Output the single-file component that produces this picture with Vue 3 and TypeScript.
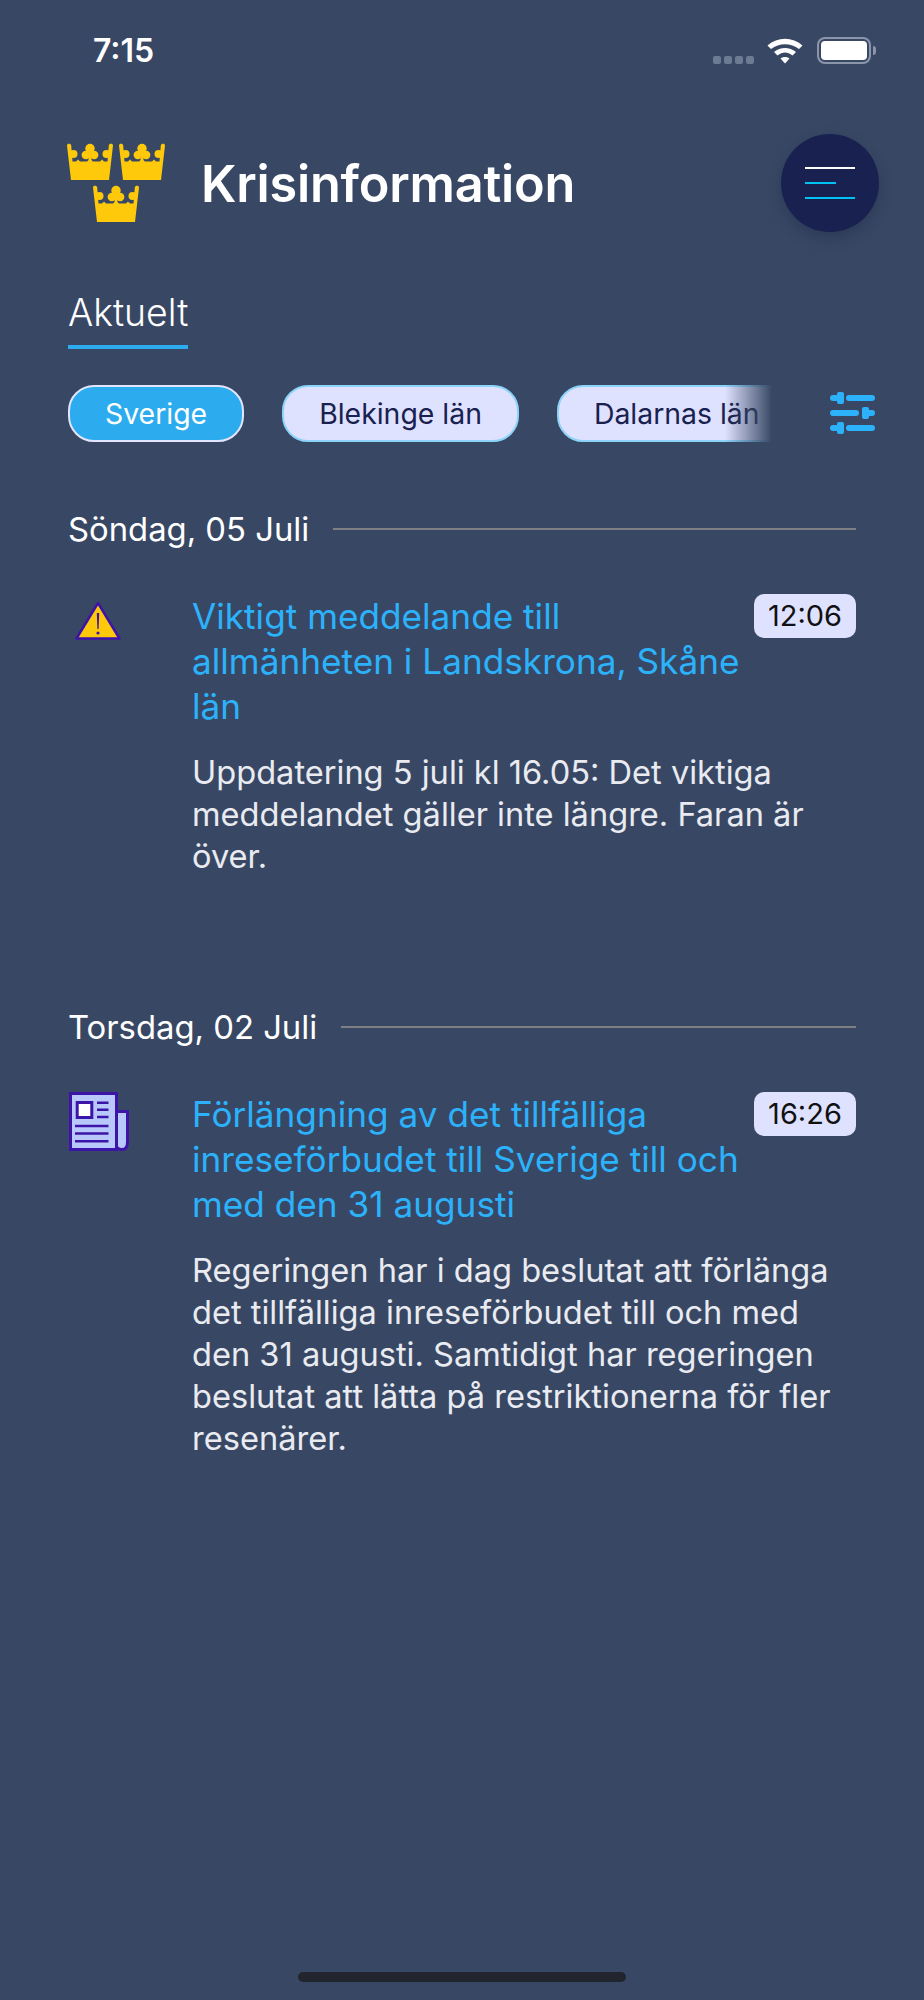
<template>
  <div class="screen">
    <!-- status bar -->
    <div class="status-bar">
      <span class="clock">7:15</span>
      <div class="status-icons">
        <div class="signal"><i v-for="n in 4" :key="n"></i></div>
        <svg class="wifi" width="36" height="28" viewBox="0 0 36 28">
          <path d="M0.500 9.500C10.500 0.500 25.500 0.500 35.500 9.500L32 13C24 6.500 12 6.500 4 13Z" fill="#fff" />
          <path d="M7 16C13.500 10.500 22.500 10.500 29 16L25.500 19.500C20.500 15.500 15.500 15.500 10.500 19.500Z" fill="#fff" />
          <path d="M13.500 22.500C16 20.500 20 20.500 22.500 22.500L18 27.500Z" fill="#fff" />
        </svg>
        <div class="battery"><div class="battery-fill"></div></div>
      </div>
    </div>

    <!-- header -->
    <header class="app-header">
      <svg class="logo" width="98" height="81" viewBox="0 0 98 81">
        <defs>
          <g id="crown">
            <path
              d="M0 2.500C0 0 4 0 4.200 2.500L5.500 18.500L9 18.500L11 16.500L13 18.500L20 18.500L23 16L26 18.500L33 18.500L35 16.500L37 18.500L40.500 18.500L41.800 2.500C42 0 46 0 46 2.500L42 37H4Z"
            />
            <circle cx="6.500" cy="11" r="4" />
            <circle cx="39.500" cy="11" r="4" />
            <circle cx="23" cy="5.500" r="4.700" />
            <circle cx="18.800" cy="12" r="4.200" />
            <circle cx="27.200" cy="12" r="4.200" />
            <rect x="21.500" y="10" width="3" height="8" />
          </g>
        </defs>
        <use href="#crown" x="0" y="0" fill="#ffc90b" />
        <use href="#crown" x="52" y="0" fill="#ffc90b" />
        <use href="#crown" x="26" y="42" fill="#ffc90b" />
      </svg>
      <h1 class="app-title">Krisinformation</h1>
      <button class="menu-btn">
        <span class="bar white"></span>
        <span class="bar short"></span>
        <span class="bar"></span>
      </button>
    </header>

    <!-- tabs -->
    <div class="tabs">
      <div class="tab">Aktuelt</div>
    </div>

    <!-- region filter -->
    <div class="filter-row">
      <div class="chips">
        <div v-for="c in chips" :key="c" class="chip" :class="{ active: c === 'Sverige' }">{{ c }}</div>
        <div class="chip-fade"></div>
      </div>
      <svg class="sliders" width="45" height="42" viewBox="0 0 45 42">
        <g fill="#2cb2fb">
          <rect x="0" y="3" width="9" height="6" rx="3" />
          <rect x="7" y="0" width="7" height="12" rx="2" />
          <rect x="16" y="3" width="29" height="6" rx="3" />
          <rect x="0" y="18" width="29" height="6" rx="3" />
          <rect x="32" y="15" width="7" height="12" rx="2" />
          <rect x="36" y="18" width="9" height="6" rx="3" />
          <rect x="0" y="33" width="9" height="6" rx="3" />
          <rect x="7" y="30" width="7" height="12" rx="2" />
          <rect x="16" y="33" width="29" height="6" rx="3" />
        </g>
      </svg>
    </div>

    <!-- feed -->
    <section v-for="day in days" :key="day.date" class="day">
      <div class="day-head">
        <span class="day-label">{{ day.date }}</span>
        <span class="day-line"></span>
      </div>
      <article class="item">
        <div class="item-icon" :class="day.icon">
          <svg v-if="day.icon === 'warning'" width="46" height="39" viewBox="0 0 46 39">
            <path d="M23 2L44.500 37.500H1.500Z" fill="#ffc90b" stroke="#3d14a8" stroke-width="2.500" stroke-linejoin="round" />
            <path d="M21.800 12H24.200L23.600 28H22.400Z" fill="#3d14a8" />
            <circle cx="23" cy="32" r="1.600" fill="#3d14a8" />
          </svg>
          <svg v-else width="60" height="59" viewBox="0 0 60 59">
            <path d="M47 19.500H58.500V50Q58.500 57.500 53 57.500Q47 57.500 47 52Z" fill="#b8c8fb" stroke="#3d14a8" stroke-width="3" />
            <rect x="1.500" y="1.500" width="46" height="56" fill="#b8c8fb" stroke="#3d14a8" stroke-width="3" />
            <rect x="8.200" y="10.500" width="14.600" height="15" fill="#fff" stroke="#3d14a8" stroke-width="3" />
            <path d="M28 10.700H39.500M28 17.700H39.500M28 25H39.500M6 34H39.500M6 41.500H39.500M6 49.300H39.500" stroke="#3d14a8" stroke-width="2.400" />
          </svg>
        </div>
        <div class="item-body">
          <div class="item-top">
            <h2 class="item-title">{{ day.title }}</h2>
            <span class="time">{{ day.time }}</span>
          </div>
          <p class="item-text">{{ day.text }}</p>
        </div>
      </article>
    </section>

    <div class="home-indicator"></div>
  </div>
</template>

<script setup lang="ts">
const chips = ['Sverige', 'Blekinge län', 'Dalarnas län']

const days = [
  {
    date: 'Söndag, 05 Juli',
    icon: 'warning',
    title: 'Viktigt meddelande till allmänheten i Landskrona, Skåne län',
    time: '12:06',
    text: 'Uppdatering 5 juli kl 16.05: Det viktiga meddelandet gäller inte längre. Faran är över.'
  },
  {
    date: 'Torsdag, 02 Juli',
    icon: 'news',
    title: 'Förlängning av det tillfälliga inreseförbudet till Sverige till och med den 31 augusti',
    time: '16:26',
    text: 'Regeringen har i dag beslutat att förlänga det tillfälliga inreseförbudet till och med den 31 augusti. Samtidigt har regeringen beslutat att lätta på restriktionerna för fler resenärer.'
  }
]
</script>

<style>
html,
body {
  margin: 0;
  background: #384864;
}
</style>

<style scoped>
.screen {
  position: relative;
  height: 2000px;
  box-sizing: border-box;
  padding: 0 68px;
  overflow: hidden;
  background: #384864;
  color: #fff;
  font-family: Inter, 'Liberation Sans', sans-serif;
}

.status-bar {
  display: flex;
  justify-content: space-between;
  align-items: center;
  height: 100px;
  margin-right: -15px;
  padding-left: 25px;
}

.clock {
  font-size: 32px;
  font-weight: 600;
}

.status-icons {
  display: flex;
  align-items: center;
  gap: 13px;
}

.signal {
  display: flex;
  gap: 3px;
  margin-top: 20px;
}

.signal i {
  width: 8px;
  height: 8px;
  border-radius: 2px;
  background: #6c7a92;
}

.wifi {
  margin-right: 1px;
}

.battery {
  position: relative;
  width: 54px;
  height: 27px;
  box-sizing: border-box;
  border: 2px solid #8b95a9;
  border-radius: 8px;
  padding: 2px;
}

.battery::after {
  content: '';
  position: absolute;
  right: -7px;
  top: 7px;
  width: 3px;
  height: 9px;
  border-radius: 0 3px 3px 0;
  background: #8b95a9;
}

.battery-fill {
  height: 100%;
  border-radius: 4px;
  background: #fff;
}

.app-header {
  display: flex;
  align-items: center;
  height: 130px;
  margin-top: 18px;
}

.logo {
  flex: none;
  margin-left: -1px;
  margin-right: 36px;
}

.app-title {
  flex: 1;
  margin: 0;
  font-size: 50.400px;
  font-weight: 600;
  letter-spacing: -0.2px;
}

.menu-btn {
  flex: none;
  display: flex;
  flex-direction: column;
  align-items: flex-start;
  justify-content: center;
  gap: 13px;
  width: 98px;
  height: 98px;
  margin-right: -23px;
  padding: 0 0 0 24px;
  border: 0;
  border-radius: 50%;
  background: #18214f;
  box-shadow: 0 6px 14px rgba(20, 28, 60, 0.3);
}

.bar {
  width: 50px;
  height: 2px;
  background: #00c2f3;
}

.bar.white {
  background: #fff;
}

.bar.short {
  width: 31px;
}

.tabs {
  display: flex;
  margin-top: 45px;
}

.tab {
  padding-bottom: 12px;
  border-bottom: 4px solid #2cacee;
  font-size: 37.400px;
  font-weight: 300;
  line-height: 40px;
}

.filter-row {
  display: flex;
  align-items: center;
  justify-content: space-between;
  margin-top: 36px;
  margin-right: -19px;
}

.chips {
  position: relative;
  display: flex;
  gap: 38px;
  width: 704px;
  overflow: hidden;
}

.chip {
  flex: none;
  box-sizing: border-box;
  height: 57px;
  padding: 0 35px;
  border: 2px solid #8cd3fa;
  border-radius: 26px;
  background: #dfe2ff;
  color: #18214f;
  font-size: 28.400px;
  line-height: 53px;
}

.chip.active {
  border-color: #e3e5ff;
  background: #2cacee;
  color: #fff;
}

.chip-fade {
  position: absolute;
  top: 0;
  right: 0;
  bottom: 0;
  width: 47px;
  background: linear-gradient(to right, rgba(56, 72, 100, 0), #384864);
}

.sliders {
  flex: none;
  margin-bottom: 2px;
}

.day {
  margin-top: 67px;
}

.day + .day {
  margin-top: 130px;
}

.day-head {
  display: flex;
  align-items: center;
  gap: 24px;
  height: 40px;
}

.day-label {
  font-size: 32.800px;
}

.day-line {
  flex: 1;
  height: 2px;
  background: #7d7f84;
}

.item {
  display: flex;
  margin-top: 45px;
}

.item-icon {
  flex: none;
  box-sizing: border-box;
  width: 124px;
  margin-right: 0;
}

.item-icon.warning {
  padding: 7px 0 0 7px;
}

.item-icon.news {
  padding: 0 0 0 1px;
}

.item-body {
  flex: 1;
  min-width: 0;
}

.item-top {
  position: relative;
}

.item-title {
  margin: 0;
  padding-right: 111px;
  color: #2cb2fb;
  font-size: 35.200px;
  font-weight: 400;
  line-height: 45px;
}

.time {
  position: absolute;
  top: 0;
  right: 0;
  width: 102px;
  height: 44px;
  border-radius: 10px;
  background: #dfe2ff;
  color: #111;
  font-size: 29px;
  line-height: 44px;
  text-align: center;
}

.item-text {
  margin: 22px 0 0;
  color: #e9ebf1;
  font-size: 32.600px;
  line-height: 42px;
}

.home-indicator {
  position: absolute;
  left: 50%;
  bottom: 18px;
  width: 328px;
  height: 10px;
  margin-left: -164px;
  border-radius: 5px;
  background: #22252e;
}
</style>
